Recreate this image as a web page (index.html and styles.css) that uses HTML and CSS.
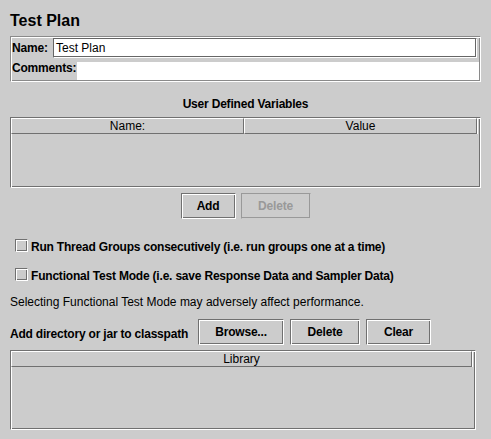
FILE: index.html
```html
<!doctype html>
<html lang="en">
  <head>
    <title>Test Plan</title>
    <link rel="stylesheet" href="styles.css">
  </head>
  <body>
    <div class="page">
      <h1>Test Plan</h1>
      <div class="name-panel etched">
        <div class="field-row">
          <label>Name:</label>
          <div class="text-field">Test Plan</div>
        </div>
        <div class="field-row comments">
          <label>Comments:</label>
          <div class="text-area"></div>
        </div>
      </div>

      <h2>User Defined Variables</h2>
      <div class="table-box vars-table">
        <div class="table-header">
          <div class="th">Name:</div>
          <div class="th">Value</div>
          <div class="th-corner"></div>
        </div>
      </div>
      <div class="button-row">
        <button class="btn btn-add">Add</button>
        <button class="btn btn-delete" disabled>Delete</button>
      </div>

      <div class="check-row first">
        <span class="checkbox"></span>
        <span class="check-label">Run Thread Groups consecutively (i.e. run groups one at a time)</span>
      </div>
      <div class="check-row">
        <span class="checkbox"></span>
        <span class="check-label">Functional Test Mode (i.e. save Response Data and Sampler Data)</span>
      </div>
      <p class="note">Selecting Functional Test Mode may adversely affect performance.</p>

      <div class="classpath-row">
        <span class="classpath-label">Add directory or jar to classpath</span>
        <button class="btn btn-browse">Browse...</button>
        <button class="btn btn-cp-delete">Delete</button>
        <button class="btn btn-clear">Clear</button>
      </div>
      <div class="table-box lib-table">
        <div class="table-header">
          <div class="th">Library</div>
          <div class="th-corner"></div>
        </div>
      </div>
    </div>
  </body>
</html>
```

FILE: styles.css
```css
body {
  font-family: "Liberation Sans", Arial, sans-serif;
  font-size: 12px;
  background-color: #cccccc;
  color: #000;
  margin: 0;
  padding: 0;
}

.page {
  padding: 0 10px;
  width: 471px;
}

h1 {
  font-size: 16px;
  font-weight: bold;
  line-height: 18px;
  margin: 0;
  padding-top: 12px;
}

/* lowered etched look, like Swing Metal */
.etched {
  border: 1px solid;
  border-color: #8a8a8a #ffffff #ffffff #8a8a8a;
  box-shadow: inset 1px 1px #ffffff, inset -1px -1px #8a8a8a;
}

.name-panel {
  margin-top: 6px;
  padding: 1px;
  display: flex;
  flex-direction: column;
  gap: 4px;
}

.field-row {
  display: flex;
  align-items: center;
  height: 20px;
}

.field-row label {
  font-weight: bold;
  letter-spacing: -0.2px;
  width: 41px;
}

.text-field {
  flex: 1;
  height: 18px;
  line-height: 18px;
  background: #fff;
  border: 1px solid;
  border-color: #666666 #ffffff #ffffff #666666;
  box-shadow: inset -1px -1px #666666;
  padding-left: 2px;
  margin-right: 2px;
}

.field-row.comments {
  height: 18px;
  align-items: flex-start;
}

.field-row.comments label {
  width: 65px;
  line-height: 12px;
}

.text-area {
  flex: 1;
  height: 18px;
  background: #fff;
}

h2 {
  font-size: 12px;
  font-weight: bold;
  letter-spacing: -0.2px;
  line-height: 14px;
  text-align: center;
  margin: 15px 0 0;
}

.table-box {
  border: 1px solid;
  border-color: #707070 #ffffff #ffffff #707070;
  box-shadow: inset 1px 1px #ffffff, inset -1px -1px #707070;
  box-sizing: border-box;
}

.vars-table {
  margin-top: 6px;
  height: 71px;
}

.lib-table {
  margin-top: 5px;
  height: 80px;
  width: 466px;
}

.table-header {
  display: flex;
  height: 16px;
}

.th {
  flex: 1;
  text-align: center;
  line-height: 14px;
  border: 1px solid;
  border-color: #ffffff #707070 #707070 #ffffff;
}

.th-corner {
  width: 2px;
  border-left: 1px solid #ffffff;
}

.button-row {
  display: flex;
  justify-content: center;
  gap: 5px;
  margin-top: 5px;
}

.btn {
  font-family: "Liberation Sans", Arial, sans-serif;
  font-size: 12px;
  font-weight: bold;
  letter-spacing: -0.2px;
  color: #000;
  background: #cccccc;
  height: 26px;
  padding: 0;
  margin: 0;
  border: 1px solid;
  border-color: #707070 #ffffff #ffffff #707070;
  box-shadow: inset 1px 1px #ffffff, inset -1px -1px #707070;
}

.btn:disabled {
  color: #999999;
  border-color: #999999 #cccccc #cccccc #999999;
  box-shadow: inset -1px -1px #999999;
}

.btn-add { width: 55px; }
.btn-delete { width: 70px; }

.check-row {
  display: flex;
  align-items: flex-start;
  margin-top: 14px;
  padding-left: 5px;
}

.check-row.first {
  margin-top: 20px;
}

.checkbox {
  width: 13px;
  height: 13px;
  box-sizing: border-box;
  border: 1px solid;
  border-color: #707070 #ffffff #ffffff #707070;
  box-shadow: inset 1px 1px #ffffff, inset -1px -1px #707070;
  margin-right: 3px;
}

.check-label {
  font-weight: bold;
  letter-spacing: -0.2px;
  line-height: 14px;
  margin-top: 1px;
}

.note {
  margin: 12px 0 0;
  line-height: 14px;
}

.classpath-row {
  display: flex;
  align-items: center;
  gap: 6px;
  margin-top: 10px;
}

.classpath-label {
  font-weight: bold;
  letter-spacing: -0.2px;
  white-space: nowrap;
  flex-shrink: 0;
  padding-top: 3px;
  width: 182px;
}

.btn-browse { width: 86px; }
.btn-cp-delete { width: 70px; }
.btn-clear { width: 65px; }
```
